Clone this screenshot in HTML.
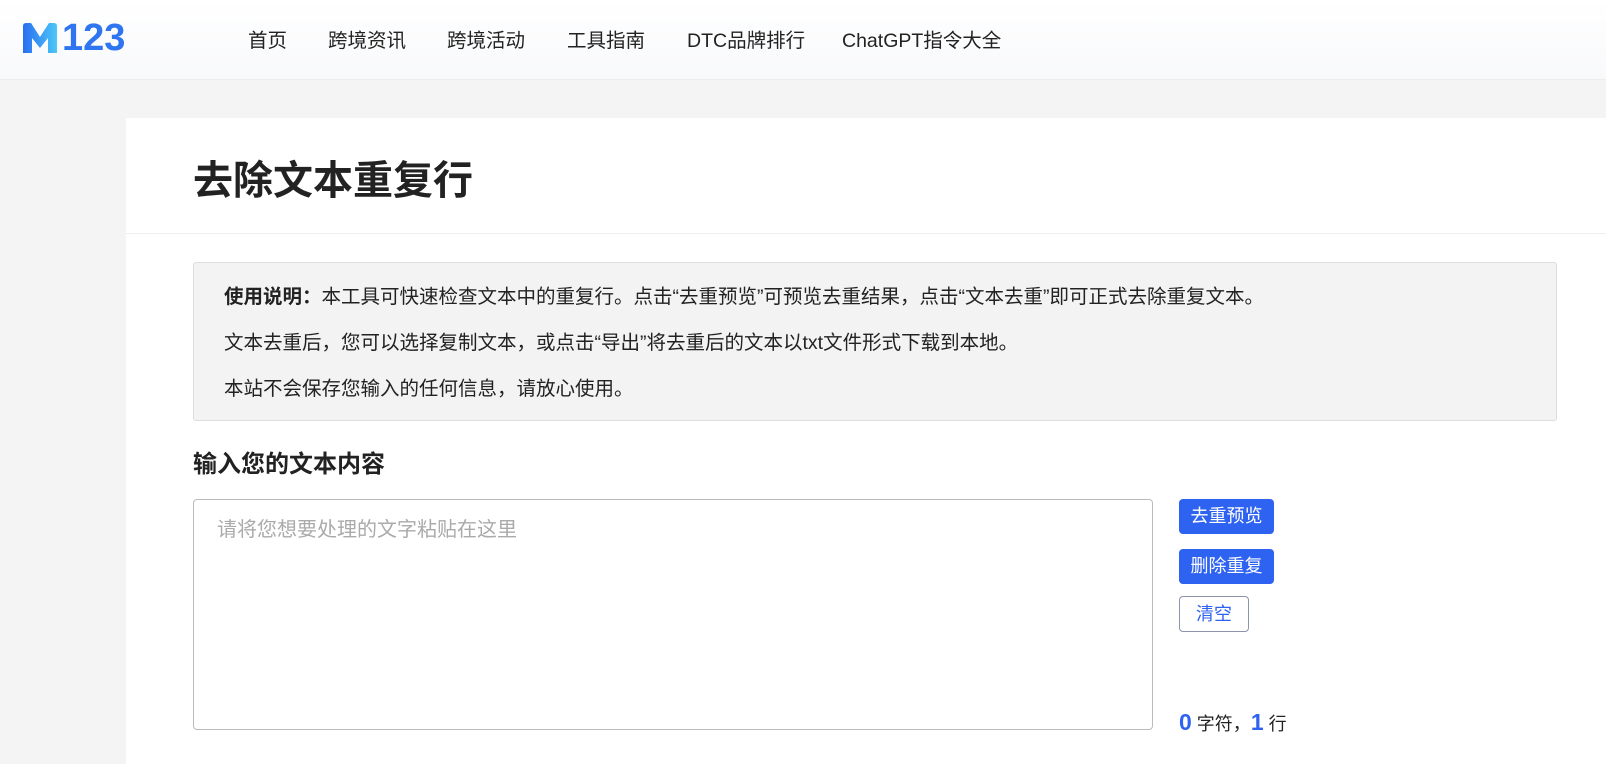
<!DOCTYPE html>
<html><head><meta charset="utf-8"><style>
*{box-sizing:border-box;margin:0;padding:0}
body{width:1606px;height:764px;overflow:hidden;background:#f4f4f4;font-family:"Liberation Sans","Noto Sans CJK SC",sans-serif;color:#222;position:relative}
.hdr{position:absolute;left:0;top:0;width:1606px;height:80px;background:linear-gradient(#fff,#f8f9fb);border-bottom:1px solid #eee}
.logo{position:absolute;left:22px;top:22px;height:32px;display:flex;align-items:center}
.logo .n{font:bold 38px "Liberation Sans",sans-serif;color:#2f74f0;margin-left:4px;line-height:32px}
.nav span{position:absolute;top:27px;font-size:19.5px;color:#222;line-height:28px;white-space:nowrap}
.main{position:absolute;left:126px;top:118px;width:1480px;height:646px;background:#fff}
h1{position:absolute;left:67px;top:38px;font-size:40px;line-height:50px;font-weight:bold;color:#222;white-space:nowrap}
.line{position:absolute;left:0;top:115px;width:100%;border-top:1px solid #eee}
.note{position:absolute;left:67px;top:144px;width:1364px;height:159px;background:#f3f3f3;border:1px solid #ddd;border-radius:3px;padding:21px 30px;font-size:19.5px;line-height:26px;white-space:nowrap}
.note p{margin-bottom:20px}
h2{position:absolute;left:67px;top:331px;font-size:24px;line-height:32px;font-weight:bold;white-space:nowrap}
.ta{position:absolute;left:67px;top:381px;width:960px;height:231px;border:1px solid #bbb;border-radius:4px;padding:16px 23px;color:#aaa;font-size:20px;line-height:28px}
.b{position:absolute;left:1053px;width:95px;height:35px;background:#2e62f0;color:#fff;border-radius:4px;font-size:18px;text-align:center;line-height:35px}
.c{position:absolute;left:1053px;top:478px;width:70px;height:36px;border:1px solid #8a94aa;border-radius:4px;color:#2e62f0;font-size:18px;text-align:center;line-height:34px}
.cnt{position:absolute;left:1053px;top:590px;font-size:18px;line-height:28px;white-space:nowrap}
.cnt b{color:#2e62f0;font-size:23px}
</style></head><body>
<div class="hdr">
<div class="logo"><svg width="36" height="30" viewBox="0 0 34 30"><defs><linearGradient id="g" x1="0" x2="1"><stop offset="0" stop-color="#2a6ef0"/><stop offset="1" stop-color="#4cc8f8"/></linearGradient></defs><path d="M0 3Q0 0 3 0H8L17 14L26 0H31Q34 0 34 3V30H25V15L17 25L9 15V30H0Z" fill="url(#g)"/></svg><span class="n">123</span></div>
<div class="nav"><span style="left:248px">首页</span><span style="left:328px">跨境资讯</span><span style="left:447px">跨境活动</span><span style="left:567px">工具指南</span><span style="left:687px">DTC品牌排行</span><span style="left:842px">ChatGPT指令大全</span></div>
</div>
<div class="main">
<h1>去除文本重复行</h1>
<div class="line"></div>
<div class="note"><p><b>使用说明：</b>本工具可快速检查文本中的重复行。点击“去重预览”可预览去重结果，点击“文本去重”即可正式去除重复文本。</p><p>文本去重后，您可以选择复制文本，或点击“导出”将去重后的文本以txt文件形式下载到本地。</p><p>本站不会保存您输入的任何信息，请放心使用。</p></div>
<h2>输入您的文本内容</h2>
<div class="ta">请将您想要处理的文字粘贴在这里</div>
<div class="b" style="top:381px">去重预览</div>
<div class="b" style="top:431px">删除重复</div>
<div class="c">清空</div>
<div class="cnt"><b>0</b> 字符，<b>1</b> 行</div>
</div>
</body></html>
